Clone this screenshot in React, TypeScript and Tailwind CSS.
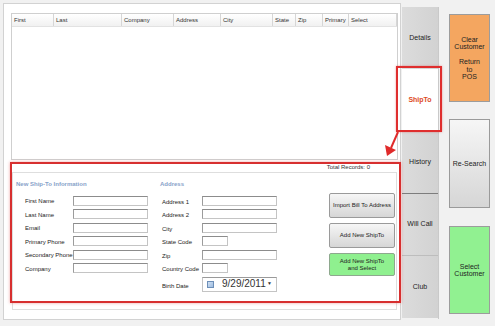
import React from 'react';

const columns = [
  { label: 'First', w: 'w-[42px]' },
  { label: 'Last', w: 'w-[68px]' },
  { label: 'Company', w: 'w-[52px]' },
  { label: 'Address', w: 'w-[47px]' },
  { label: 'City', w: 'w-[52px]' },
  { label: 'State', w: 'w-[23px]' },
  { label: 'Zip', w: 'w-[27px]' },
  { label: 'Primary', w: 'w-[26px]' },
  { label: 'Select', w: 'flex-1' },
];

const shipToFields = ['First Name', 'Last Name', 'Email', 'Primary Phone', 'Secondary Phone', 'Company'];

const addressFields: { label: string; small?: boolean }[] = [
  { label: 'Address 1' },
  { label: 'Address 2' },
  { label: 'City' },
  { label: 'State Code', small: true },
  { label: 'Zip' },
  { label: 'Country Code', small: true },
];

function TextBox({ small }: { small?: boolean }) {
  return (
    <div
      className={`h-[10px] bg-white border border-[#c4c4c4] border-t-[#8c8c8c] border-l-[#9c9c9c] ${small ? 'w-[26px]' : 'w-[75px]'}`}
    />
  );
}

function GrayButton({ children, className = '' }: { children: React.ReactNode; className?: string }) {
  return (
    <div
      className={`flex items-center justify-center text-center rounded-[2px] border border-[#9a9a9a] bg-gradient-to-b from-[#f6f6f6] to-[#d6d6d6] text-[#222] ${className}`}
    >
      {children}
    </div>
  );
}

export default function App() {
  return (
    <div className="relative w-[495px] h-[326px] overflow-hidden bg-[#f1f1f1] flex font-['Liberation_Sans',Arial,sans-serif] text-[#222]">
      {/* Main search panel */}
      <div className="ml-[3px] mt-[3px] w-[398px] h-[317px] bg-white border border-[#d2d2d2] flex flex-col pl-[7px] pt-[9px]">
        {/* Results grid */}
        <div className="w-[387px] h-[147px] border border-[#cfcfcf] bg-white flex flex-col">
          <div className="h-[13px] flex border-b border-[#e2e2e2] bg-gradient-to-b from-white to-[#f1f1f1]">
            {columns.map((c) => (
              <div
                key={c.label}
                className={`${c.w} h-full border-r border-[#d6d6d6] pl-[2px] text-[6px] leading-[13px] text-[#333]`}
              >
                {c.label}
              </div>
            ))}
          </div>
        </div>

        {/* Total records */}
        <div className="w-[387px] h-[12px] flex items-end justify-end pr-[28px] text-[6px] text-[#333]">
          Total Records: 0
        </div>

        {/* New ShipTo form */}
        <div className="ml-[1px] w-[385px] h-[138px] border border-[#dedede] flex pl-[3px] pt-[6px]">
          <div className="w-[144px] flex flex-col">
            <div className="h-[10px] text-[6px] font-bold text-[#87a2c9] leading-[10px]">New Ship-To Information</div>
            <div className="mt-[5px] flex flex-col">
              {shipToFields.map((f) => (
                <div key={f} className="h-[13.5px] flex items-center">
                  <div className="w-[57px] pl-[9px] text-[6px] whitespace-nowrap text-[#222] pt-[2px]">{f}</div>
                  <TextBox />
                </div>
              ))}
            </div>
          </div>

          <div className="w-[169px] flex flex-col">
            <div className="h-[10px] text-[6px] font-bold text-[#87a2c9] leading-[10px]">Address</div>
            <div className="mt-[5px] flex flex-col">
              {addressFields.map((f) => (
                <div key={f.label} className="h-[13.5px] flex items-center">
                  <div className="w-[42px] pl-[2px] text-[6px] whitespace-nowrap text-[#222] pt-[3px]">{f.label}</div>
                  <TextBox small={f.small} />
                </div>
              ))}
              <div className="mt-[1px] h-[16px] flex items-center">
                <div className="w-[42px] pl-[2px] text-[6px] whitespace-nowrap text-[#222] pt-[4px]">Birth Date</div>
                <div className="w-[75px] h-[15px] bg-white border border-[#c4c4c4] border-t-[#9a9a9a] flex items-center pl-[4px] pr-[4px]">
                  <div className="w-[7px] h-[7px] border border-[#6d8fb8] bg-gradient-to-br from-[#cfe0f3] to-[#9fbde0]" />
                  <span className="ml-[8px] text-[10px] text-[#333] leading-none">9/29/2011</span>
                  <span className="ml-auto text-[5px] text-[#333]">▼</span>
                </div>
              </div>
            </div>
          </div>

          <div className="w-[66px] flex flex-col gap-[5px] pt-[14px]">
            <GrayButton className="h-[25px] text-[6px]">Import Bill To Address</GrayButton>
            <GrayButton className="h-[25px] text-[6px]">Add New ShipTo</GrayButton>
            <div className="h-[23px] flex items-center justify-center text-center rounded-[2px] border border-[#8ea88e] bg-[#8ff08f] text-[6px] leading-[7px] text-[#222]">
              Add New ShipTo
              <br />
              and Select
            </div>
          </div>
        </div>
      </div>

      {/* Tabs */}
      <div className="ml-px mt-[7px] w-[37px] h-[312px] flex flex-col border-r border-[#c9c9c9] text-[7px] text-[#222]">
        <div className="h-[62px] flex items-center justify-center bg-gradient-to-r from-[#dcdcdc] to-[#d2d2d2]">Details</div>
        <div className="h-[62px] flex items-center justify-center bg-white font-bold text-[#dd4b1e]">ShipTo</div>
        <div className="h-[63px] flex items-center justify-center bg-gradient-to-r from-[#dcdcdc] to-[#d2d2d2] border-b border-[#7d7d7d]">History</div>
        <div className="h-[62px] flex items-center justify-center bg-gradient-to-r from-[#dcdcdc] to-[#d2d2d2] border-b border-[#bdbdbd]">Will Call</div>
        <div className="h-[62px] flex items-center justify-center bg-gradient-to-r from-[#dcdcdc] to-[#d2d2d2]">Club</div>
      </div>

      {/* Action buttons */}
      <div className="ml-[10px] pt-[14px] w-[41px] flex flex-col text-[7px] leading-[7.5px] text-[#222]">
        <div className="h-[88px] flex items-center justify-center text-center border border-[#9c9c9c] bg-[#f4a660]">
          Clear
          <br />
          Customer
          <br />
          <br />
          Return
          <br />
          to
          <br />
          POS
        </div>
        <GrayButton className="mt-[17px] h-[89px] rounded-none">Re-Search</GrayButton>
        <div className="mt-[18px] h-[88px] flex items-center justify-center text-center border border-[#9c9c9c] bg-[#91f191]">
          Select
          <br />
          Customer
        </div>
      </div>

      {/* Annotation overlays */}
      <div className="absolute left-[396px] top-[66px] w-[46px] h-[66px] border-2 border-[#df2e2e] shadow-[0_0_2px_rgba(220,60,60,0.5)]" />
      <div className="absolute left-[10px] top-[162px] w-[391px] h-[141px] border-2 border-[#d72f2f] shadow-[0_0_3px_rgba(220,60,60,0.45)]" />
      <svg className="absolute left-[380px] top-[130px]" width="22" height="28" viewBox="0 0 22 28">
        <line x1="18" y1="2" x2="11" y2="18" stroke="#e02a2a" strokeWidth="2" />
        <polygon points="5,15 16,20 7,26" fill="#e02a2a" />
      </svg>
    </div>
  );
}
